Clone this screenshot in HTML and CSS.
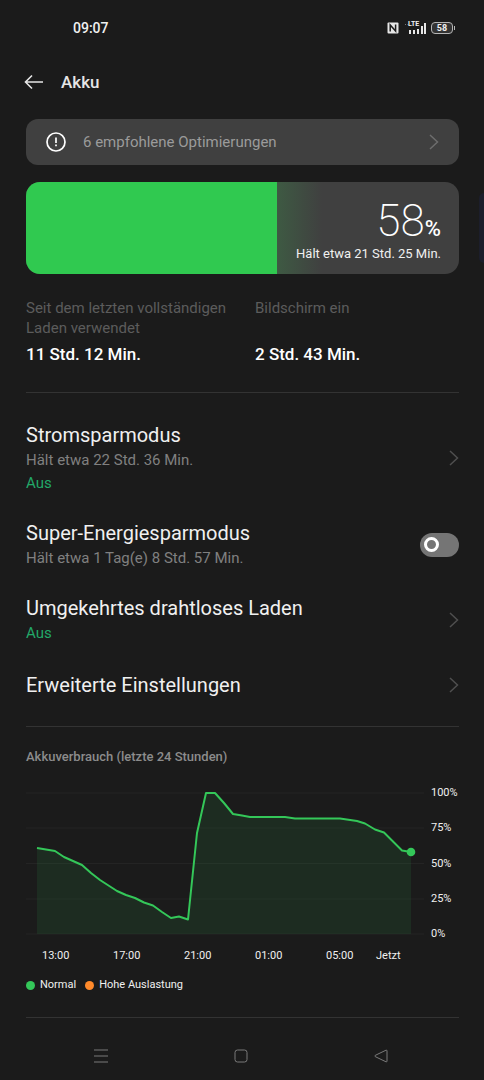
FILE: index.html
```html
<!DOCTYPE html>
<html lang="de">
<head>
    <meta charset="UTF-8">
    <meta name="viewport" content="width=device-width, initial-scale=1.0">
    <title>Akku</title>
    <link rel="stylesheet" href="styles.css">
</head>
<body>
    <div class="status-bar">
        <span class="time">09:07</span>
        <div class="status-icons">
            <svg width="12" height="12" viewBox="0 0 12 12">
                <rect x="0.5" y="0.5" width="11" height="11" rx="1" fill="#e6e6e6"/>
                <path d="M3.2 9.5V3L8.6 9V2.5" fill="none" stroke="#1b1b1b" stroke-width="1.500"/>
            </svg>
            <div class="signal">
                <span class="lte">LTE</span>
                <svg width="22" height="14" viewBox="0 0 22 14">
                    <path d="M1 3.500h1M3.500 3.500h1" stroke="#777" stroke-width="1"/>
                    <path d="M6 9v4M10 9v4M14 8v5M18 5v8M21 2v11" stroke="#e6e6e6" stroke-width="2"/>
                </svg>
            </div>
            <div class="battery-icon">58</div>
        </div>
    </div>

    <header class="app-bar">
        <button class="back" aria-label="Zurück">
            <svg width="20" height="16" viewBox="0 0 20 16">
                <path d="M19 8H1.500M8 1.500L1.500 8L8 14.500" fill="none" stroke="#e6e6e6" stroke-width="1.600"/>
            </svg>
        </button>
        <h1>Akku</h1>
    </header>

    <main>
        <a class="banner" href="#">
            <svg width="20" height="20" viewBox="0 0 20 20">
                <circle cx="10" cy="10" r="9" fill="none" stroke="#fff" stroke-width="1.700"/>
                <path d="M10 5.500v5.500M10 12.500v1.700" stroke="#fff" stroke-width="1.700"/>
            </svg>
            <span>6 empfohlene Optimierungen</span>
            <svg class="chevron light" width="10" height="16" viewBox="0 0 10 16"><path d="M1 1l7.500 7L1 15"/></svg>
        </a>

        <section class="charge">
            <div class="charge-fill" style="width: 58%"></div>
            <div class="charge-glow"></div>
            <div class="charge-text">
                <div class="percent">58<span>%</span></div>
                <div class="remaining">Hält etwa 21 Std. 25 Min.</div>
            </div>
        </section>

        <section class="usage">
            <div>
                <p>Seit dem letzten vollständigen Laden verwendet</p>
                <strong>11 Std. 12 Min.</strong>
            </div>
            <div>
                <p>Bildschirm ein</p>
                <strong>2 Std. 43 Min.</strong>
            </div>
        </section>

        <nav class="settings">
            <a class="row" href="#">
                <span class="row-text">
                    <span class="title">Stromsparmodus</span>
                    <span class="sub">Hält etwa 22 Std. 36 Min.</span>
                    <span class="sub state">Aus</span>
                </span>
                <svg class="chevron" width="10" height="16" viewBox="0 0 10 16"><path d="M1 1l7.500 7L1 15"/></svg>
            </a>
            <label class="row" for="superSaver">
                <span class="row-text">
                    <span class="title">Super-Energiesparmodus</span>
                    <span class="sub">Hält etwa 1 Tag(e) 8 Std. 57 Min.</span>
                </span>
                <input type="checkbox" class="switch" id="superSaver">
            </label>
            <a class="row" href="#">
                <span class="row-text">
                    <span class="title">Umgekehrtes drahtloses Laden</span>
                    <span class="sub state">Aus</span>
                </span>
                <svg class="chevron" width="10" height="16" viewBox="0 0 10 16"><path d="M1 1l7.500 7L1 15"/></svg>
            </a>
            <a class="row" href="#">
                <span class="row-text">
                    <span class="title">Erweiterte Einstellungen</span>
                </span>
                <svg class="chevron" width="10" height="16" viewBox="0 0 10 16"><path d="M1 1l7.500 7L1 15"/></svg>
            </a>
        </nav>

        <section class="history">
            <h2>Akkuverbrauch (letzte 24 Stunden)</h2>
            <div class="chart">
                <svg class="plot" viewBox="0 0 398 141">
                    <path d="M0 0H398M0 35H398M0 70.500H398M0 106H398M0 141H398" stroke="#242424"/>
                    <path class="area" d="M11 141V55L29 58L38 64L56 72L65 80L74 87L91 98L100 102L109 105L118 109.500L127 112.500L136 119L145 125L153 123.500L162 126.500L171 40L180 0H189L198 10L207 21L216 22.500L224 24H259L269 25.500H314L331 28L339 30.500L349 36.500L358 39.500L367 48.500L376 57.500L385 59V141Z"/>
                    <path class="line" d="M11 55L29 58L38 64L56 72L65 80L74 87L91 98L100 102L109 105L118 109.500L127 112.500L136 119L145 125L153 123.500L162 126.500L171 40L180 0H189L198 10L207 21L216 22.500L224 24H259L269 25.500H314L331 28L339 30.500L349 36.500L358 39.500L367 48.500L376 57.500L385 59"/>
                    <circle cx="385" cy="59" r="4.300" fill="#34c759"/>
                </svg>
                <div class="y-axis">
                    <span>100%</span><span>75%</span><span>50%</span><span>25%</span><span>0%</span>
                </div>
            </div>
            <div class="x-axis">
                <span>13:00</span><span>17:00</span><span>21:00</span><span>01:00</span><span>05:00</span><span>Jetzt</span>
            </div>
            <div class="legend">
                <span class="normal">Normal</span>
                <span class="heavy">Hohe Auslastung</span>
            </div>
        </section>
    </main>

    <footer class="nav-bar">
        <button aria-label="Letzte Apps">
            <svg width="14" height="14" viewBox="0 0 14 14"><path d="M0 1h14M0 7h14M0 13h14"/></svg>
        </button>
        <button aria-label="Startseite">
            <svg width="14" height="14" viewBox="0 0 14 14"><rect x="1" y="1" width="12" height="12" rx="2.500"/></svg>
        </button>
        <button aria-label="Zurück">
            <svg width="14" height="14" viewBox="0 0 14 14"><path d="M12 1.200L1.200 6.400Q0.300 7 1.200 7.600L12 12.800Q13 13.100 13 12.200V1.800Q13 0.900 12 1.200Z"/></svg>
        </button>
    </footer>

    <div class="edge-handle"></div>
</body>
</html>
```
FILE: styles.css
```css
* {
    box-sizing: border-box;
}
body {
    margin: 0;
    background-color: #1b1b1b;
    color: #f0f0f0;
    font-family: Roboto, "Liberation Sans", sans-serif;
    position: relative;
}
h1, h2, p {
    margin: 0;
}
a {
    color: inherit;
    text-decoration: none;
}
button {
    padding: 0;
    border: none;
    background: none;
    cursor: pointer;
}
svg {
    display: block;
    flex-shrink: 0;
}

/* status bar */
.status-bar {
    display: flex;
    justify-content: space-between;
    align-items: center;
    height: 56px;
    padding: 0 29px 0 73px;
}
.time {
    font-size: 14px;
    font-weight: 500;
}
.status-icons {
    display: flex;
    align-items: center;
    gap: 5px;
}
.signal {
    position: relative;
}
.lte {
    position: absolute;
    top: 0;
    left: 4px;
    font-size: 7px;
    line-height: 7px;
    font-weight: 700;
}
.battery-icon {
    position: relative;
    width: 22px;
    height: 12px;
    margin-right: 2px;
    border: 1px solid #b5b5b5;
    border-radius: 4px;
    background-color: #333;
    font-size: 9px;
    line-height: 10px;
    font-weight: 700;
    text-align: center;
}
.battery-icon::after {
    content: "";
    position: absolute;
    top: 3px;
    right: -3px;
    width: 1px;
    height: 4px;
    background-color: #b5b5b5;
}

/* title */
.app-bar {
    display: flex;
    align-items: center;
    gap: 17px;
    height: 52px;
    padding: 0 24px;
}
h1 {
    font-size: 17px;
    font-weight: 500;
    color: #e6e6e6;
}

main {
    padding: 11px 25px 0 26px;
}
.banner {
    display: flex;
    align-items: center;
    gap: 17px;
    height: 46px;
    padding: 0 20px;
    border-radius: 12px;
    background-color: #404040;
    color: #9b9b9b;
    font-size: 15px;
}
.chevron {
    margin-left: auto;
    fill: none;
    stroke: #4f4f4f;
    stroke-width: 1.5;
}
.chevron.light {
    stroke: #6d6d6d;
}

/* charge level */
.charge {
    display: flex;
    position: relative;
    height: 92px;
    margin-top: 17px;
    border-radius: 14px;
    background-color: #404040;
    overflow: hidden;
}
.charge-fill {
    background-color: #30c950;
}
.charge-glow {
    width: 45px;
    background: linear-gradient(to right, #3e5a43, #404040);
}
.charge-text {
    position: absolute;
    right: 18px;
    bottom: 11px;
    text-align: right;
}
.percent {
    font-size: 44px;
    line-height: 30px;
    font-weight: 200;
    color: #fff;
}
.percent span {
    font-size: 22px;
    font-weight: 500;
}
.remaining {
    margin-top: 1px;
    font-size: 13px;
    line-height: 18px;
}

/* usage times */
.usage {
    display: grid;
    grid-template-columns: 1fr 1fr;
    gap: 25px;
    padding: 24px 0 26px;
    border-bottom: 1px solid #333;
}
.usage div {
    display: flex;
    flex-direction: column;
    justify-content: space-between;
}
.usage p {
    color: #5c5c5c;
    font-size: 15px;
    line-height: 20px;
}
.usage strong {
    margin-top: 4px;
    font-size: 17px;
    line-height: 24px;
    font-weight: 500;
    color: #fff;
}

/* settings */
.settings {
    padding: 16px 0 13px;
    border-bottom: 1px solid #333;
}
.row {
    display: flex;
    align-items: center;
    justify-content: space-between;
    min-height: 56px;
    padding: 12px 0;
    cursor: pointer;
}
.title, .sub {
    display: block;
}
.title {
    font-size: 20px;
    line-height: 28px;
}
.sub {
    color: #808080;
    font-size: 15px;
    line-height: 23px;
}
.state {
    color: #22a868;
}
.switch {
    appearance: none;
    display: flex;
    align-items: center;
    width: 39px;
    height: 24px;
    margin: 0;
    padding: 0 4px;
    border-radius: 12px;
    background-color: #757575;
    cursor: pointer;
}
.switch::before {
    content: "";
    width: 9px;
    height: 9px;
    border: 3px solid #fff;
    border-radius: 50%;
}
.switch:checked {
    justify-content: flex-end;
    background-color: #30c950;
}

/* battery history */
.history {
    padding: 20px 0 25px;
    border-bottom: 1px solid #333;
}
h2 {
    color: #8c8c8c;
    font-size: 13px;
    line-height: 20px;
    font-weight: 500;
}
.chart {
    display: grid;
    grid-template-columns: 1fr 28px;
    gap: 7px;
    margin-top: 19px;
}
.plot {
    width: 100%;
    margin: 7px 0;
    overflow: visible;
}
.area {
    fill: #34c759;
    fill-opacity: 0.1;
}
.line {
    fill: none;
    stroke: #34c759;
    stroke-width: 2;
    stroke-linejoin: round;
}
.y-axis {
    display: flex;
    flex-direction: column;
    justify-content: space-between;
}
.y-axis, .x-axis, .legend {
    font-size: 11px;
    line-height: 14px;
}
.x-axis {
    display: grid;
    grid-template-columns: 71fr 71fr 71fr 71fr 50fr 83fr;
    margin-top: 8px;
    padding-left: 16px;
}
.legend {
    display: flex;
    gap: 9px;
    margin-top: 15px;
}
.legend span {
    display: flex;
    align-items: center;
    gap: 5px;
}
.legend span::before {
    content: "";
    width: 9px;
    height: 9px;
    border-radius: 50%;
}
.normal::before {
    background-color: #34c759;
}
.heavy::before {
    background-color: #ff8a2b;
}

/* system navigation */
.nav-bar {
    display: grid;
    grid-template-columns: repeat(3, 1fr);
    padding: 14px 33px 0 31px;
}
.nav-bar button {
    display: flex;
    justify-content: center;
    align-items: center;
    height: 48px;
}
.nav-bar svg {
    fill: none;
    stroke: #7a7a7a;
}

.edge-handle {
    position: absolute;
    top: 193px;
    right: 0;
    width: 5px;
    height: 70px;
    border-radius: 5px 0 0 5px;
    background-color: #1c1e2b;
}
```
